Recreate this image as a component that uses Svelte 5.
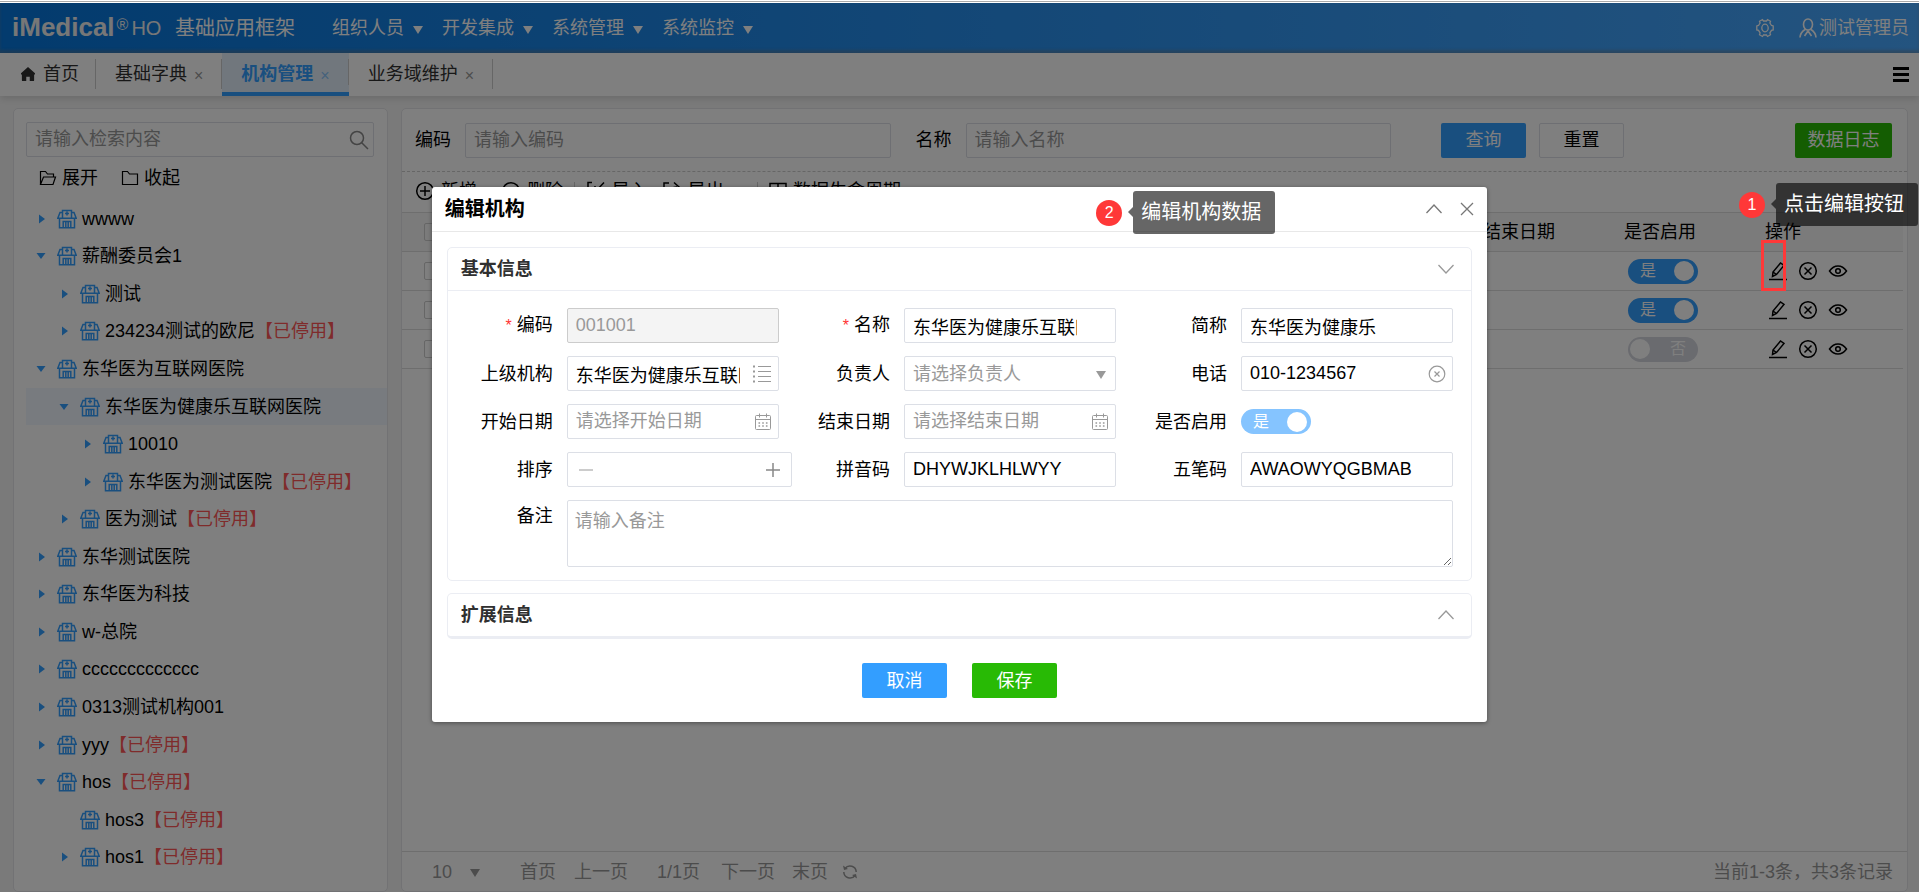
<script lang="ts">
  interface TreeNode {
    name: string;
    level: number;
    state: 'open' | 'closed' | 'leaf';
    stopped?: boolean;
    selected?: boolean;
  }

  const menus = ['组织人员', '开发集成', '系统管理', '系统监控'];

  const tabs = [
    { name: '基础字典', active: false },
    { name: '机构管理', active: true },
    { name: '业务域维护', active: false }
  ];

  const nodes: TreeNode[] = [
    { name: 'wwww', level: 0, state: 'closed' },
    { name: '薪酬委员会1', level: 0, state: 'open' },
    { name: '测试', level: 1, state: 'closed' },
    { name: '234234测试的欧尼', level: 1, state: 'closed', stopped: true },
    { name: '东华医为互联网医院', level: 0, state: 'open' },
    { name: '东华医为健康乐互联网医院', level: 1, state: 'open', selected: true },
    { name: '10010', level: 2, state: 'closed' },
    { name: '东华医为测试医院', level: 2, state: 'closed', stopped: true },
    { name: '医为测试', level: 1, state: 'closed', stopped: true },
    { name: '东华测试医院', level: 0, state: 'closed' },
    { name: '东华医为科技', level: 0, state: 'closed' },
    { name: 'w-总院', level: 0, state: 'closed' },
    { name: 'ccccccccccccc', level: 0, state: 'closed' },
    { name: '0313测试机构001', level: 0, state: 'closed' },
    { name: 'yyy', level: 0, state: 'closed', stopped: true },
    { name: 'hos', level: 0, state: 'open', stopped: true },
    { name: 'hos3', level: 1, state: 'leaf', stopped: true },
    { name: 'hos1', level: 1, state: 'closed', stopped: true }
  ];

  const rows = $state([{ enabled: true }, { enabled: true }, { enabled: false }]);

  let form = $state({
    code: '001001',
    name: '东华医为健康乐互联网医院',
    shortName: '东华医为健康乐',
    parent: '东华医为健康乐互联网医院',
    owner: '',
    phone: '010-1234567',
    start: '',
    end: '',
    enabled: true,
    sort: '',
    pinyin: 'DHYWJKLHLWYY',
    wubi: 'AWAOWYQGBMAB',
    remark: ''
  });

  function step(n: number) {
    form.sort = String(Number(form.sort) + n);
  }
</script>

{#snippet caret()}
  <svg class="caret" width="10" height="8" viewBox="0 0 10 8"><path d="M0 0h10L5 8z" fill="currentColor" /></svg>
{/snippet}

{#snippet chevron(up: boolean)}
  <svg width="18" height="18" viewBox="0 0 18 18" fill="none" stroke="currentColor" stroke-width="1.3">
    <path d={up ? 'M1.5 13 9 5l7.5 8' : 'M1.5 5 9 13l7.5-8'} />
  </svg>
{/snippet}

{#snippet calendar()}
  <svg class="suffix" width="18" height="18" viewBox="0 0 18 18" fill="none" stroke="currentColor">
    <rect x="1.5" y="2.5" width="15" height="14" rx="1" />
    <path d="M1.5 6.5h15M5.5 0.5v4M12.5 0.5v4" />
    <path d="M4.5 10h9M4.5 13h9" stroke-width="1.6" stroke-dasharray="1.6 2.1" />
  </svg>
{/snippet}

{#snippet circled(d: string)}
  <svg width="20" height="20" viewBox="0 0 20 20" fill="none" stroke="currentColor" stroke-width="1.5">
    <circle cx="10" cy="10" r="8.3" />
    <path {d} />
  </svg>
{/snippet}

<div class="page">
  <div class="edge"></div>
  <div class="app">
    <header class="topbar">
      <div class="logo"><b>iMedical</b><span class="reg">®</span><span class="ho">HO</span></div>
      <span class="product">基础应用框架</span>
      <nav>
        {#each menus as menu}
          <button class="menu">{menu}{@render caret()}</button>
        {/each}
      </nav>
      <button class="icon" aria-label="settings">
        <svg width="18" height="20" viewBox="0 0 18 20" fill="none" stroke="currentColor" stroke-width="1.3">
          <path d="M6.5 1.5 7.5 3h3l1-1.5 3 1.7-.6 1.8 1.6 2.5 1.7.4v4l-1.7.5-1.6 2.5.6 1.9-3 1.7L10.500 17h-3l-1 1.500-3-1.700.6-1.900L2.500 12.400.8 11.900v-4l1.700-.4L4.100 5l-.6-1.800z" />
          <ellipse cx="9" cy="10" rx="3.200" ry="3.800" />
        </svg>
      </button>
      <button class="user">
        <svg width="18" height="20" viewBox="0 0 18 20" fill="none" stroke="currentColor" stroke-width="1.6">
          <ellipse cx="9" cy="6.500" rx="4.500" ry="5.500" />
          <path d="M6 11.500C3 13.500 1.200 16 1 19.500M12 11.500c3 2 4.800 4.500 5 8M5.500 18 9 13l3.500 5" />
        </svg>测试管理员
      </button>
    </header>

    <div class="tabs">
      <button class="tab home">
        <svg width="14" height="14" viewBox="0 0 16 16"><path d="M8 0 0 7v1.500h1V15q0 1 1 1h4v-5h4v5h4q1 0 1-1V8.500h1V7z" fill="#303030" /></svg>首页
      </button>
      {#each tabs as tab}
        <button class="tab" class:active={tab.active}>{tab.name}<span class="x">×</span></button>
      {/each}
      <button class="icon more" aria-label="tabs">
        <svg width="16" height="15" viewBox="0 0 16 15"><path d="M0 0h16v3H0zM0 6h16v3H0zM0 12h16v3H0z" /></svg>
      </button>
    </div>

    <main>
      <aside class="card">
        <div class="box search">
          <input aria-label="检索" placeholder="请输入检索内容" />
          <svg width="20" height="20" viewBox="0 0 20 20" fill="none" stroke="#888" stroke-width="1.500">
            <circle cx="8" cy="8" r="6.500" /><path d="m12.500 12.500 6.500 6.500" />
          </svg>
        </div>
        <div class="fold">
          <button>
            <svg width="18" height="16" viewBox="0 0 18 16" fill="none" stroke="currentColor" stroke-width="1.200">
              <path d="M1.500 14.500V1.500h5l2 2.500h6v3M1.500 14.500l3-7.500h12l-2.500 7.500z" />
            </svg>展开
          </button>
          <button>
            <svg width="18" height="16" viewBox="0 0 18 16" fill="none" stroke="currentColor" stroke-width="1.200">
              <path d="M1.500 14.500V1.500h5l2 2.500h8v10.500z" />
            </svg>收起
          </button>
        </div>
        <ul class="tree">
          {#each nodes as node}
            <li class:selected={node.selected} style="padding-left: {8 + node.level * 23}px">
              <span class="toggle">
                {#if node.state !== 'leaf'}
                  <svg width="10" height="10" viewBox="0 0 10 10">
                    <path d={node.state === 'open' ? 'M0.500 2h9L5 8z' : 'M3 0.500v9l6-4.500z'} fill="#339eff" />
                  </svg>
                {/if}
              </span>
              <svg width="20" height="20" viewBox="0 0 20 20" fill="none" stroke="#339eff" stroke-width="1.500">
                <path d="M5.500 9V1.500h9V9M5.500 3.500H3L.8 9.200h18.400L17 3.500h-2.500M10 2.500v4M8 4.500h4" />
                <path d="M2.500 9.500v9.300h15V9.500M6.200 18.500v-6h7.600v6M8.800 13v5.500M11.200 13v5.500" />
              </svg>
              <span class="name">{node.name}{#if node.stopped}<em>【已停用】</em>{/if}</span>
            </li>
          {/each}
        </ul>
      </aside>

      <section class="card content">
        <div class="filter">
          <label for="q-code">编码</label>
          <div class="box"><input id="q-code" placeholder="请输入编码" /></div>
          <label for="q-name">名称</label>
          <div class="box"><input id="q-name" placeholder="请输入名称" /></div>
          <div class="actions">
            <button class="btn blue">查询</button>
            <button class="btn plain">重置</button>
          </div>
          <button class="btn green log">数据日志</button>
        </div>

        <div class="toolbar">
          <button>{@render circled('M10 5v10M5 10h10')}新增</button>
          <button>{@render circled('M5 10h10')}删除</button>
          <i></i>
          <div class="group">
            <button>
              <svg width="20" height="20" viewBox="0 0 20 20" fill="none" stroke="currentColor" stroke-width="1.500"><path d="M6 1.500H2v17h16V10M18 1.500 9 11M9 5v6h6" /></svg>导入
            </button>
            <button>
              <svg width="20" height="20" viewBox="0 0 20 20" fill="none" stroke="currentColor" stroke-width="1.500"><path d="M7 2H2v16h16v-6M8 12q0-6 7-6M12 1.500 17 6l-5 4.500" /></svg>导出
            </button>
          </div>
          <i></i>
          <button>
            <svg width="18" height="18" viewBox="0 0 18 18" fill="none" stroke="currentColor" stroke-width="1.500"><path d="M1 1.500h16v15H1zM1 7h16M9 1.500v15" /></svg>数据生命周期
          </button>
        </div>

        <table>
          <thead>
            <tr>
              <th class="check"><input type="checkbox" aria-label="全选" /></th>
              <td></td>
              <th class="col">结束日期</th>
              <th class="col">是否启用</th>
              <th class="ops">操作</th>
            </tr>
          </thead>
          <tbody>
            {#each rows as row}
              <tr>
                <td class="check"><input type="checkbox" aria-label="选择" /></td>
                <td></td>
                <td></td>
                <td>
                  <label class="switch" class:on={row.enabled}>
                    <input type="checkbox" bind:checked={row.enabled} />
                    <span>{row.enabled ? '是' : '否'}</span>
                  </label>
                </td>
                <td>
                  <div class="links">
                    <button aria-label="编辑">
                      <svg width="20" height="20" viewBox="0 0 20 20" fill="none" stroke="currentColor" stroke-width="1.500">
                        <path d="M1 18.500h18M4.500 15.500l.5-4.500L12.500 2l3.500 2.500L8.500 13.500zM5 11l3.500 2.500" />
                      </svg>
                    </button>
                    <button aria-label="停用">{@render circled('m6.500 6.500 7 7M13.500 6.500l-7 7')}</button>
                    <button aria-label="查看">
                      <svg width="20" height="20" viewBox="0 0 20 20" fill="none" stroke="currentColor" stroke-width="1.500">
                        <path d="M1.500 10Q5 5 10 5t8.500 5Q15 15 10 15t-8.500-5z" /><circle cx="10" cy="10" r="2.300" />
                      </svg>
                    </button>
                  </div>
                </td>
              </tr>
            {/each}
          </tbody>
        </table>

        <footer>
          <span class="size">
            <select aria-label="每页条数"><option>10</option></select>
            {@render caret()}
          </span>
          <button class="first">首页</button>
          <button class="prev">上一页</button>
          <span class="count">1/1页</span>
          <button class="next">下一页</button>
          <button class="last">末页</button>
          <button class="icon" aria-label="刷新">
            <svg width="16" height="16" viewBox="0 0 16 16" fill="none" stroke="currentColor" stroke-width="1.500">
              <path d="M3 4.500A6.200 6.200 0 0 1 14.200 8M13 11.500A6.200 6.200 0 0 1 1.800 8" />
              <path d="M1 1.500 2 6l4-1zM15 14.500l-1-4.500-4 1z" fill="currentColor" stroke="none" />
            </svg>
          </button>
          <span class="total">当前1-3条，共3条记录</span>
        </footer>
      </section>
    </main>

    <div class="mask">
      <div class="dialog" role="dialog" aria-labelledby="dialog-title">
        <div class="dialog-head">
          <h2 id="dialog-title">编辑机构</h2>
          <button class="icon" aria-label="折叠">{@render chevron(true)}</button>
          <button class="icon" aria-label="关闭">
            <svg width="14" height="14" viewBox="0 0 14 14" fill="none" stroke="currentColor" stroke-width="1.300"><path d="m1 1 12 12M13 1 1 13" /></svg>
          </button>
        </div>

        <form onsubmit={(e) => e.preventDefault()}>
          <section class="panel">
            <h3>基本信息<button type="button" class="icon" aria-label="收起面板">{@render chevron(false)}</button></h3>
            <div class="fields">
              <div class="field">
                <label for="code"><s>*</s>编码</label>
                <div class="box disabled"><input id="code" value={form.code} disabled /></div>
              </div>
              <div class="field">
                <label for="name"><s>*</s>名称</label>
                <div class="box pad"><input id="name" bind:value={form.name} /></div>
              </div>
              <div class="field">
                <label for="short">简称</label>
                <div class="box pad"><input id="short" bind:value={form.shortName} /></div>
              </div>
              <div class="field">
                <label for="parent">上级机构</label>
                <div class="box pad">
                  <input id="parent" bind:value={form.parent} />
                  <svg class="suffix" width="20" height="18" viewBox="0 0 20 18" fill="none" stroke="currentColor">
                    <path d="M6 1.500h13M6 6.500h13M6 11.500h13M6 16.500h13" />
                    <path d="M1 1.500h2M1 6.500h2M1 11.500h2M1 16.500h2" stroke-width="2" />
                  </svg>
                </div>
              </div>
              <div class="field">
                <label for="owner">负责人</label>
                <div class="box">
                  <select id="owner" bind:value={form.owner}><option value="">请选择负责人</option></select>
                  <span class="suffix">{@render caret()}</span>
                </div>
              </div>
              <div class="field">
                <label for="phone">电话</label>
                <div class="box pad">
                  <input id="phone" bind:value={form.phone} />
                  <svg class="suffix" width="18" height="18" viewBox="0 0 18 18" fill="none" stroke="currentColor" stroke-width="1.200">
                    <circle cx="9" cy="9" r="7.800" /><path d="m6.500 6.500 5 5M11.500 6.500l-5 5" />
                  </svg>
                </div>
              </div>
              <div class="field">
                <label for="start">开始日期</label>
                <div class="box pad"><input id="start" placeholder="请选择开始日期" bind:value={form.start} />{@render calendar()}</div>
              </div>
              <div class="field">
                <label for="end">结束日期</label>
                <div class="box pad"><input id="end" placeholder="请选择结束日期" bind:value={form.end} />{@render calendar()}</div>
              </div>
              <div class="field">
                <label for="enabled">是否启用</label>
                <label class="switch light" class:on={form.enabled}>
                  <input id="enabled" type="checkbox" bind:checked={form.enabled} />
                  <span>{form.enabled ? '是' : '否'}</span>
                </label>
              </div>
              <div class="field">
                <label for="sort">排序</label>
                <div class="box number">
                  <button type="button" class="minus" aria-label="减少" onclick={() => step(-1)}>
                    <svg width="14" height="14" viewBox="0 0 14 14" stroke="currentColor" stroke-width="1.500"><path d="M0 7h14" /></svg>
                  </button>
                  <input id="sort" bind:value={form.sort} />
                  <button type="button" aria-label="增加" onclick={() => step(1)}>
                    <svg width="14" height="14" viewBox="0 0 14 14" stroke="currentColor" stroke-width="1.500"><path d="M0 7h14M7 0v14" /></svg>
                  </button>
                </div>
              </div>
              <div class="field">
                <label for="pinyin">拼音码</label>
                <div class="box"><input id="pinyin" bind:value={form.pinyin} /></div>
              </div>
              <div class="field">
                <label for="wubi">五笔码</label>
                <div class="box"><input id="wubi" bind:value={form.wubi} /></div>
              </div>
              <div class="field wide">
                <label for="remark">备注</label>
                <textarea id="remark" placeholder="请输入备注" bind:value={form.remark}></textarea>
              </div>
            </div>
          </section>

          <section class="panel closed">
            <h3>扩展信息<button type="button" class="icon" aria-label="展开面板">{@render chevron(true)}</button></h3>
          </section>

          <div class="buttons">
            <button type="button" class="btn blue">取消</button>
            <button class="btn green">保存</button>
          </div>
        </form>

        <div class="callout second"><b>2</b><p>编辑机构数据</p></div>
      </div>
    </div>

    <div class="marker"></div>
    <div class="callout first-step"><b>1</b><p>点击编辑按钮</p></div>
  </div>
</div>

<style>
  :global(body) {
    font: 18px/24px 'Liberation Sans', 'Noto Sans CJK SC', sans-serif;
    color: #000;
  }

  .page {
    display: flex;
    flex-direction: column;
    min-height: 100vh;
    overflow: hidden;
  }

  .page * {
    box-sizing: border-box;
  }

  button,
  input,
  select,
  textarea {
    font: inherit;
    color: inherit;
    background: none;
    border: 0;
    margin: 0;
    padding: 0;
    outline: none;
  }

  button {
    display: flex;
    align-items: center;
    white-space: nowrap;
    cursor: pointer;
  }

  svg {
    display: block;
    flex: none;
  }

  select {
    appearance: none;
  }

  ::placeholder {
    color: #999;
    opacity: 1;
  }

  .edge {
    height: 3px;
    background: linear-gradient(#fff 1px, #aaa 1px, #aaa 2px, #fff 2px);
  }

  .app {
    position: relative;
    flex: 1;
    display: flex;
    flex-direction: column;
    background: #f5f5f5;
  }

  .topbar {
    display: flex;
    align-items: center;
    height: 50px;
    padding: 0 10px 0 12px;
    color: #fff;
    background: linear-gradient(90deg, #0676dc, #48a8ff);
    box-shadow: inset 0 -3px 3px rgba(128, 128, 128, 0.4);
  }

  .logo {
    display: flex;
    width: 163px;
    font-size: 26px;
    color: #eee;
  }

  .reg {
    font-size: 16px;
    line-height: 20px;
    margin: 0 3px 0 2px;
  }

  .ho {
    font-size: 20px;
    line-height: 26px;
  }

  .product {
    width: 157px;
    font-size: 20px;
  }

  nav {
    display: flex;
    flex: 1;
  }

  .menu {
    width: 110px;
    gap: 9px;
  }

  .caret {
    margin-top: 3px;
  }

  .user {
    gap: 2px;
    margin-left: 25px;
  }

  .tabs {
    position: relative;
    display: flex;
    height: 43px;
    background: #fff;
    box-shadow: 0 2px 8px rgba(0, 0, 0, 0.15);
  }

  .tab {
    position: relative;
    gap: 7px;
    padding: 0 19px 2px;
    color: #303030;
  }

  .tab::after {
    content: '';
    position: absolute;
    right: 0;
    top: 6px;
    bottom: 7px;
    border-right: 1px solid #ccc;
  }

  .home {
    gap: 8px;
    padding-left: 21px;
    padding-right: 17px;
  }

  .tab .x {
    color: #999;
    font-size: 16px;
    padding-top: 4px;
  }

  .tab.active {
    color: #339eff;
    font-weight: bold;
    background: #e3effb;
    border-bottom: 4px solid #339eff;
    padding-top: 2px;
    padding-bottom: 0;
  }

  .tab.active .x {
    color: #8ac4f8;
    font-weight: normal;
  }

  .more {
    margin-left: auto;
    padding-right: 10px;
  }

  main {
    display: flex;
    flex: 1;
    gap: 13px;
    padding: 12px 11px 0 13px;
  }

  .card {
    background: #fff;
    border: 1px solid #e4e4e8;
    border-radius: 5px;
  }

  aside {
    display: flex;
    flex-direction: column;
    flex: none;
    width: 375px;
    padding: 13px 0 15px 12px;
  }

  .box {
    position: relative;
    display: flex;
    align-items: center;
    flex: 1;
    min-width: 0;
    height: 35px;
    padding: 0 8px;
    border: 1px solid #dcdfe6;
    border-radius: 2px;
  }

  .box input,
  .box select {
    flex: 1;
    width: 100%;
    min-width: 0;
    height: 30px;
  }

  .box.pad {
    padding-right: 38px;
  }

  .box.disabled {
    color: #999;
    background: #f4f4f4;
    border-color: #ccc;
  }

  .box select {
    color: #999;
  }

  .suffix {
    position: absolute;
    right: 6px;
    color: #999;
  }

  span.suffix {
    right: 9px;
  }

  .search {
    flex: none;
    margin-right: 13px;
    padding-right: 4px;
  }

  .fold {
    display: flex;
    gap: 23px;
    padding: 9px 13px 10px;
  }

  .fold button {
    gap: 5px;
  }

  .tree {
    display: grid;
    grid-auto-rows: 1fr;
    flex: 1;
    margin: 0;
    padding: 0;
    list-style: none;
  }

  .tree li {
    display: flex;
    align-items: center;
    white-space: nowrap;
  }

  .tree .selected {
    background: #f0f7ff;
  }

  .toggle {
    width: 23px;
    padding-left: 2px;
  }

  .name {
    padding-left: 5px;
  }

  .name em {
    font-style: normal;
    color: #ff5757;
  }

  .content {
    display: flex;
    flex-direction: column;
    flex: 1;
    min-width: 0;
  }

  .filter {
    display: flex;
    align-items: center;
    height: 63px;
    padding: 0 15px 0 13px;
    border-bottom: 1px dashed #ccc;
  }

  .filter label {
    padding-right: 14px;
  }

  .filter .box + label {
    padding-left: 25px;
  }

  .actions {
    display: flex;
    gap: 13px;
    padding: 0 171px 0 50px;
  }

  .btn {
    justify-content: center;
    width: 85px;
    height: 35px;
    border-radius: 2px;
  }

  .blue {
    color: #fff;
    background: #339eff;
  }

  .green {
    color: #fff;
    background: #28ba05;
  }

  .plain {
    border: 1px solid #dcdfe6;
  }

  .log {
    width: 97px;
  }

  .toolbar,
  .group {
    display: flex;
    align-items: center;
  }

  .toolbar {
    gap: 24px;
    height: 40px;
    padding: 0 13px 3px;
  }

  .toolbar button {
    gap: 6px;
  }

  .toolbar i {
    height: 18px;
    border-left: 1px solid #ccc;
    margin: 0 -13px;
  }

  .group {
    gap: 14px;
    padding-right: 22px;
  }

  table {
    width: calc(100% - 4px);
    border-collapse: collapse;
    table-layout: fixed;
  }

  tr {
    height: 39px;
    border-bottom: 1px solid #ddd;
  }

  thead tr {
    background: #f7f7f7;
    border-top: 1px solid #ddd;
  }

  th,
  td {
    padding: 0;
    font-weight: normal;
    text-align: left;
  }

  .check {
    width: 60px;
    padding-left: 22px;
  }

  .check input {
    appearance: none;
    display: block;
    width: 18px;
    height: 18px;
    border: 1px solid #ccc;
    border-radius: 2px;
  }

  .col {
    width: 141px;
  }

  .ops {
    width: 138px;
  }

  .links {
    display: flex;
    gap: 10px;
    padding-left: 3px;
  }

  .switch {
    display: flex;
    align-items: center;
    flex-direction: row-reverse;
    justify-content: space-between;
    width: 70px;
    height: 25px;
    margin-left: 4px;
    padding: 0 2px 0 12px;
    border-radius: 13px;
    font-size: 16px;
    color: #fff;
    background: #dcdfe6;
  }

  .switch:not(.on) {
    padding: 0 12px 0 2px;
    background: #d4d6de;
  }

  .switch.on {
    flex-direction: row;
    padding: 0 4px 0 12px;
    background: #339eff;
  }

  .switch input {
    appearance: none;
    order: 1;
    width: 20px;
    height: 20px;
    border-radius: 50%;
    background: #fff;
  }

  .switch.light {
    margin: 0;
    background: #85c4ff;
  }

  footer {
    display: flex;
    align-items: center;
    height: 40px;
    margin-top: auto;
    padding: 0 14px 0 30px;
    color: #999;
    border-top: 1px solid #ddd;
  }

  .size {
    display: flex;
    align-items: center;
    width: 88px;
  }

  .size select {
    width: 38px;
  }

  .first,
  .last {
    width: 54px;
  }

  .prev {
    width: 83px;
  }

  .count {
    width: 64px;
  }

  .next {
    width: 71px;
  }

  .last {
    width: 50px;
  }

  .total {
    margin-left: auto;
  }

  .mask {
    position: absolute;
    inset: 0;
    display: flex;
    justify-content: center;
    align-items: flex-start;
    padding-top: 184px;
    background: rgba(0, 0, 0, 0.5);
  }

  .dialog {
    position: relative;
    width: 55%;
    background: #fff;
    border-radius: 3px;
    box-shadow: 0 1px 4px rgba(0, 0, 0, 0.4);
  }

  .dialog-head {
    display: flex;
    align-items: center;
    gap: 17px;
    height: 45px;
    padding: 0 13px 1px;
    color: #777;
    border-bottom: 1px solid #e8e8e8;
  }

  h2 {
    flex: 1;
    margin: 0;
    color: #000;
    font-size: 20px;
  }

  form {
    padding: 15px 15px 24px;
  }

  .panel {
    border: 1px solid #ebedf3;
    border-radius: 5px;
    margin-bottom: 12px;
  }

  .panel.closed {
    border-bottom-width: 3px;
    margin-bottom: 24px;
  }

  h3 {
    display: flex;
    align-items: center;
    justify-content: space-between;
    height: 42px;
    margin: 0;
    padding: 0 16px 0 13px;
    font-size: 18px;
    color: #303030;
  }

  h3 button {
    color: #999;
  }

  .fields {
    display: grid;
    grid-template-columns: repeat(3, minmax(0, 1fr));
    gap: 13px 20px;
    padding: 17px 18px 13px 14px;
    border-top: 1px solid #ebedf3;
  }

  .field {
    display: flex;
    align-items: center;
  }

  .field > label:first-child {
    flex: none;
    width: 105px;
    padding-right: 14px;
    text-align: right;
    white-space: nowrap;
  }

  s {
    color: #f33;
    text-decoration: none;
    font-size: 16px;
    margin-right: 5px;
  }

  .number {
    margin-right: -13px;
    padding: 0 11px;
    color: #888;
  }

  .minus {
    color: #bbb;
  }

  .wide {
    grid-column: 1 / -1;
    align-items: flex-start;
  }

  .wide > label:first-child {
    padding-top: 4px;
  }

  textarea {
    flex: 1;
    height: 67px;
    padding: 8px 7px;
    border: 1px solid #dcdfe6;
    border-radius: 2px;
    resize: vertical;
  }

  .buttons {
    display: flex;
    justify-content: center;
    gap: 25px;
  }

  .marker {
    position: absolute;
    top: 237px;
    right: 133px;
    width: 25px;
    height: 51px;
    border: 3px solid #ff3838;
  }

  .callout {
    position: absolute;
    display: flex;
    align-items: center;
    gap: 11px;
    color: #fff;
    white-space: nowrap;
  }

  .callout b {
    width: 26px;
    font-size: 16px;
    font-weight: normal;
    line-height: 26px;
    text-align: center;
    border-radius: 50%;
    background: #ff3838;
  }

  .callout p {
    position: relative;
    margin: 0;
    padding: 0 14px 0 8px;
    font-size: 20px;
    line-height: 43px;
    border-radius: 3px;
    background: rgba(0, 0, 0, 0.6);
  }

  .callout p::before {
    content: '';
    position: absolute;
    left: -5px;
    top: 16px;
    border: 5px solid transparent;
    border-left: 0;
    border-right-color: rgba(0, 0, 0, 0.6);
  }

  .first-step {
    top: 180px;
    right: 1px;
  }

  .second {
    top: 4px;
    right: 212px;
  }
</style>
